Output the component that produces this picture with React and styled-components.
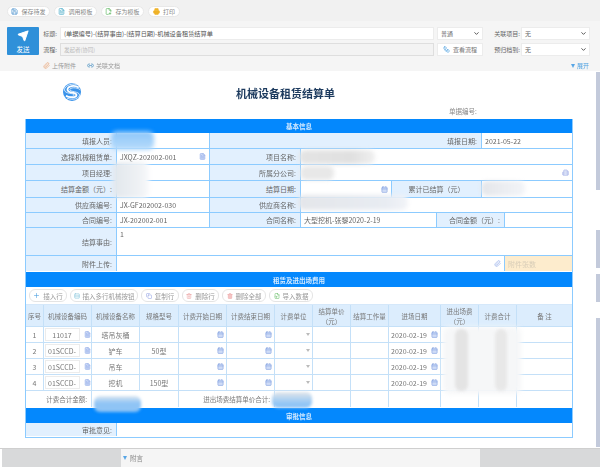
import React from 'react'
import styled, { createGlobalStyle } from 'styled-components'
import {
  Save, FileText, FilePlus2, Printer, Send, Paperclip, Link2, ChevronDown, Plus, Rows3,
  Copy, Trash2, Trash, FileInput, Calendar, Workflow, Building2
} from 'lucide-react'

const GlobalStyle = createGlobalStyle`
  * { box-sizing: border-box; }
  html, body { margin: 0; padding: 0; background: #fff; }
  body {
    width: 600px;
    height: 467px;
    overflow: hidden;
    font-family: "Noto Sans CJK SC", "Liberation Sans", sans-serif;
    font-size: 7px;
    color: #666;
  }
`

const Page = styled.div`
  display: flex;
  flex-direction: column;
  width: 600px;
  height: 467px;
  filter: blur(0.3px);
`

const TopBar = styled.div`
  display: flex;
  flex: none;
  gap: 4px;
  height: 21px;
  padding: 6px 7px 0;
  background: #f1f1f1;
`

const Pill = styled.div`
  display: flex;
  align-items: center;
  justify-content: center;
  gap: 3px;
  width: ${props => props.$w}px;
  height: 11px;
  background: #fff;
  border: 1px solid #e8e8e8;
  border-radius: 6px;
  font-size: 6px;
  color: #888;
  white-space: nowrap;
`

const Header = styled.div`
  flex: none;
  height: 50px;
  padding: 6px 10px 0 7px;
  background: #f5f5f5;
`

const HeaderGrid = styled.div`
  display: grid;
  grid-template-columns: 32px 21px 374px 49px 38px 69px;
  grid-template-rows: 13px 13px;
  row-gap: 3px;
`

const SendButton = styled.div`
  grid-row: 1 / 3;
  display: flex;
  flex-direction: column;
  align-items: center;
  justify-content: center;
  gap: 2px;
  padding-top: 2px;
  height: 28px;
  background: #2f90d9;
  border-radius: 1px;
  color: #fff;
  font-size: 6.5px;
`

const FieldLabel = styled.div`
  display: flex;
  align-items: center;
  justify-content: flex-end;
  padding-right: ${props => props.$pad || 3}px;
  font-size: 6px;
  color: #666;
  white-space: nowrap;
`

const TextInput = styled.div`
  display: flex;
  align-items: center;
  padding-left: 3px;
  background: ${props => props.$muted ? '#f3f3f3' : '#fff'};
  border: 1px solid ${props => props.$muted ? '#dedede' : '#ececec'};
  font-size: ${props => props.$muted ? 5.5 : 6.2}px;
  color: ${props => props.$muted ? '#bbb' : '#555'};
  white-space: nowrap;
`

const SelectBox = styled.div`
  display: flex;
  align-items: center;
  justify-content: space-between;
  margin-left: ${props => props.$gap || 0}px;
  padding: 0 2px 0 3px;
  background: #fff;
  border: 1px solid #ececec;
  font-size: 6px;
  color: #666;
`

const FlowButton = styled(SelectBox)`
  justify-content: center;
  gap: 3px;
  padding: 0;
  color: #777;
`

const LinkRow = styled.div`
  display: flex;
  align-items: center;
  gap: 11px;
  height: 11px;
  margin-top: 4px;
  padding: 0 1px 0 36px;
`

const LinkItem = styled.div`
  display: flex;
  align-items: center;
  gap: 2px;
  font-size: 6px;
  color: #999;
`

const ExpandLink = styled(LinkItem)`
  margin-left: auto;
  color: #4a9fe0;
`

const Middle = styled.div`
  display: flex;
  flex: none;
  height: 377px;
`

const Sheet = styled.div`
  position: relative;
  width: 596px;
  padding-left: 25px;
  background: #fff;
`

const TitleRow = styled.div`
  display: flex;
  height: 48px;
  padding: 12px 0 0 38px;
`

const Logo = styled.svg`
  flex: none;
  width: 18px;
  height: 18px;
`

const FormTitle = styled.div`
  width: 100px;
  margin: 2px 0 0 155px;
  font-size: 11px;
  line-height: 16px;
  font-weight: 700;
  color: #1c3a5e;
  white-space: nowrap;
`

const SerialLabel = styled.div`
  margin: 23px 0 0 113px;
  font-size: 6.5px;
  line-height: 10px;
  color: #888;
`

const FormBox = styled.div`
  width: 548px;
  border: solid #8ccbff;
  border-width: 0 1px 1px;
`

const SectionBar = styled.div`
  display: flex;
  align-items: center;
  justify-content: center;
  height: ${props => props.$h}px;
  background: #0488fd;
  font-size: 6.5px;
  font-weight: 700;
  color: #d8ecff;
`

const Row = styled.div`
  display: grid;
  grid-template-columns: ${props => props.$cols};
  height: ${props => props.$h || 16}px;
  border-bottom: 1px solid ${props => props.$line || '#8ccbff'};
`

const LabelCell = styled.div`
  display: flex;
  align-items: center;
  justify-content: ${props => props.$center ? 'center' : 'flex-end'};
  padding-right: ${props => props.$center ? 0 : 4}px;
  background: #e2f0fe;
  border-right: 1px solid #8ccbff;
  white-space: nowrap;
`

const ValueCell = styled.div`
  display: flex;
  align-items: ${props => props.$top ? 'flex-start' : 'center'};
  justify-content: space-between;
  padding: ${props => props.$top ? '1px 3px 0' : '0 3px'};
  background: ${props => props.$note ? '#fdeccd' : '#fff'};
  border-right: 1px solid #8ccbff;
  color: ${props => props.$note ? '#d8cdb8' : '#666'};
  white-space: nowrap;
  &:last-child { border-right: 0; }
`

const ActionBar = styled.div`
  display: flex;
  align-items: center;
  gap: 3px;
  height: 18px;
  padding-left: 3px;
  background: #fff;
  border-bottom: 1px solid #d5e8fa;
`

const ActionButton = styled(Pill)`
  height: 13px;
  font-size: 6.5px;
  color: #999;
  border-color: #e4e4e4;
`

const HeadCell = styled.div`
  display: flex;
  align-items: center;
  justify-content: center;
  padding: 0 1px;
  background: #dcedfd;
  border-right: 1px solid #c4e0f8;
  font-size: 6.5px;
  line-height: 10px;
  text-align: center;
  color: #777;
  &:last-child { border-right: 0; }
`

const DataCell = styled.div`
  display: flex;
  align-items: center;
  justify-content: ${props => props.$end ? 'flex-end' : 'center'};
  gap: 4px;
  padding: ${props => props.$end ? '0 2px 0 0' : 0};
  border-right: 1px solid #c4e0f8;
  font-size: 7px;
  color: #777;
  white-space: nowrap;
  &:last-child { border-right: 0; }
`

const CodeInput = styled.div`
  display: flex;
  align-items: center;
  justify-content: center;
  width: 35px;
  height: 13px;
  background: #fff;
  border: 1px solid #ececec;
`

const TotalLabel = styled(DataCell)`
  justify-content: flex-end;
  padding-right: 4px;
  font-size: 6.5px;
`

const Arrow = styled.span`
  width: 0;
  height: 0;
  border: 2px solid transparent;
  border-top: 3px solid #bbb;
  border-bottom: 0;
`

const Patch = styled.div`
  position: absolute;
  left: ${props => props.$x}px;
  top: ${props => props.$y}px;
  width: ${props => props.$w}px;
  height: ${props => props.$h}px;
  background: ${props => props.$bg};
  border-radius: 6px;
  filter: blur(${props => props.$blur || 1.5}px);
`

const ScrollTrack = styled.div`
  display: flex;
  flex-direction: column;
  width: 4px;
  padding-top: 1px;
  background: #fff;
`

const Thumb = styled.div`
  flex: none;
  height: ${props => props.$h}px;
  margin-bottom: ${props => props.$gap || 0}px;
  background: #c3cadb;
`

const Footer = styled.div`
  display: flex;
  flex: 1;
  border-top: 1px solid #cfcfcf;
  padding-left: 2px;
  background: #fff;
`

const FooterSide = styled.div`
  flex: ${props => props.$grow ? 1 : 'none'};
  width: 119px;
  background: #d8d9da;
`

const FooterMain = styled.div`
  display: flex;
  align-items: center;
  gap: 3px;
  width: 359px;
  padding: 0 0 0 2px;
  background: #f5f5f5;
  font-size: 6.5px;
  color: #888;
`

const Triangle = styled.span`
  width: 0;
  height: 0;
  border: 2.5px solid transparent;
  border-top: 4px solid ${props => props.$color || '#58a6e6'};
  border-bottom: 0;
`

const BASE_COLS = '91px 93px 91px 91px 90px 90px'
const ROW_COLS = '18px 48px 48px 39px 48px 48px 38px 38px 38px 52px 38px 38px 55px'
const YUAN = '\uFF08元\uFF09'

const tools = [
  { w: 43, text: '保存待发', icon: <Save size={7} color='#2c7fc4' /> },
  { w: 43, text: '调用模板', icon: <FileText size={7} color='#2f9fc0' /> },
  { w: 43, text: '存为模板', icon: <FilePlus2 size={7} color='#4caf50' /> },
  { w: 32, text: '打印', icon: <Printer size={7} color='#f0b429' fill='#f0b429' /> },
]

const actions = [
  { w: 38, text: '插入行', icon: <Plus size={7} color='#4a9fe0' /> },
  { w: 68, text: '插入多行机械按钮', icon: <Rows3 size={6} color='#7fc0d8' /> },
  { w: 38, text: '复制行', icon: <Copy size={6} color='#8c9ce0' /> },
  { w: 37, text: '删除行', icon: <Trash2 size={6} color='#e89a9a' /> },
  { w: 44, text: '删除全部', icon: <Trash size={6} color='#eda4a4' fill='#f4c4c4' /> },
  { w: 44, text: '导入数据', icon: <FileInput size={6} color='#5cb85c' /> },
]

const heads = ['序号', '机械设备编码', '机械设备名称', '规格型号', '计费开始日期', '计费结束日期', '计费单位', `结算单价${YUAN}`, '结算工作量', '进场日期', `进出场费${YUAN}`, '计费合计', '备 注']

const rows = [
  { no: 1, code: '11017', name: '塔吊灰桶', spec: '' },
  { no: 2, code: '01SCCD-', name: '铲车', spec: '50型' },
  { no: 3, code: '01SCCD-', name: '吊车', spec: '' },
  { no: 4, code: '01SCCD-', name: '挖机', spec: '150型' },
]

const patches = [
  { x: 111, y: 60, w: 43, h: 19, bg: 'linear-gradient(#8cc6fa, #b8dcfb)', blur: 2 },
  { x: 113, y: 91, w: 36, h: 36, bg: 'linear-gradient(90deg, #e2e7ec, #eef1f4 70%, #f8f9fb)', blur: 2 },
  { x: 299, y: 79, w: 76, h: 14, bg: 'linear-gradient(90deg, #e4e4e4, #e0e0e0 70%, #f0f0f0)', blur: 2 },
  { x: 300, y: 95, w: 34, h: 14, bg: '#e8e8e8', blur: 2 },
  { x: 298, y: 124, w: 110, h: 15, bg: 'linear-gradient(90deg, #e4e6ea, #e8ecf2 80%, #f2f4f8)', blur: 2 },
  { x: 481, y: 110, w: 44, h: 15, bg: 'linear-gradient(90deg, #e4e6ea, #f2f4f8)', blur: 2 },
  { x: 443, y: 256, w: 78, h: 67, bg: '#f6f7f8', blur: 2.5 },
  { x: 455, y: 258, w: 13, h: 62, bg: '#e4e4e4', blur: 1.5 },
  { x: 495, y: 258, w: 12, h: 62, bg: '#e8e8e8', blur: 1.5 },
  { x: 94, y: 325, w: 47, h: 16, bg: 'linear-gradient(#dbe6f0, #8fc4f5 45%)', blur: 1.5 },
  { x: 272, y: 321, w: 40, h: 16, bg: 'linear-gradient(#e2e6ea, #8fc4f5 75%)', blur: 1.5 },
]

const CalIcon = () => <Calendar size={7} color='#7f9fe0' fill='#cfdcf6' />
const PickIcon = () => <FileText size={7} color='#8fa8e8' fill='#cfdcf6' />

const App = () => (
  <Page>
    <GlobalStyle />
    <TopBar>
      {tools.map(tool => (
        <Pill key={tool.text} $w={tool.w}>{tool.icon}{tool.text}</Pill>
      ))}
    </TopBar>

    <Header>
      <HeaderGrid>
        <SendButton>
          <Send size={12} color='#fff' fill='#fff' />
          发送
        </SendButton>
        <FieldLabel>标题:</FieldLabel>
        <TextInput>(单据编号)-(结算事由)-(结算日期)-机械设备租赁结算单</TextInput>
        <SelectBox $gap={3}>普通<ChevronDown size={7} strokeWidth={3} color='#444' /></SelectBox>
        <FieldLabel $pad={1}>关联项目:</FieldLabel>
        <SelectBox>无<ChevronDown size={7} strokeWidth={3} color='#444' /></SelectBox>
        <FieldLabel>流程:</FieldLabel>
        <TextInput $muted>发起者(协同)</TextInput>
        <FlowButton $gap={3}><Workflow size={7} color='#4a9fe0' />查看流程</FlowButton>
        <FieldLabel $pad={1}>预归档到:</FieldLabel>
        <SelectBox>无<ChevronDown size={7} strokeWidth={3} color='#444' /></SelectBox>
      </HeaderGrid>
      <LinkRow>
        <LinkItem><Paperclip size={7} color='#e8a070' />上传附件</LinkItem>
        <LinkItem><Link2 size={7} color='#2f80b8' />关联文档</LinkItem>
        <ExpandLink><Triangle />展开</ExpandLink>
      </LinkRow>
    </Header>

    <Middle>
      <Sheet>
        <TitleRow>
          <Logo viewBox='0 0 24 24'>
            <circle cx='12' cy='12' r='12' fill='#3a93ea' />
            <path d='M21 6C15 2 6 4 6 9c0 5 12 3 12 7 0 3-7 5-14 1' fill='none' stroke='#fff' strokeWidth='2.4' />
            <path d='M18 2C13 0 2 3 2 9c0 6 13 4 13 7 0 2-6 3-11 2' fill='none' stroke='#fff' strokeWidth='1' />
            <path d='M23 9C18 5 9 6 9 9c0 3 13 2 13 7 0 4-8 8-17 4' fill='none' stroke='#fff' strokeWidth='1' />
          </Logo>
          <FormTitle>机械设备租赁结算单</FormTitle>
          <SerialLabel>单据编号:</SerialLabel>
        </TitleRow>

        <FormBox>
          <SectionBar $h={14}>基本信息</SectionBar>
          <Row $cols='91px 93px 272px 90px'>
            <LabelCell>填报人员:</LabelCell>
            <ValueCell />
            <LabelCell>填报日期:</LabelCell>
            <ValueCell>2021-05-22</ValueCell>
          </Row>
          <Row $cols='91px 93px 91px 271px'>
            <LabelCell>选择机械租赁单:</LabelCell>
            <ValueCell>JXQZ-202002-001<PickIcon /></ValueCell>
            <LabelCell>项目名称:</LabelCell>
            <ValueCell />
          </Row>
          <Row $cols='91px 93px 91px 271px'>
            <LabelCell>项目经理:</LabelCell>
            <ValueCell />
            <LabelCell>所属分公司:</LabelCell>
            <ValueCell><span /><Building2 size={7} color='#a8b4e8' fill='#d8dff6' /></ValueCell>
          </Row>
          <Row $cols={BASE_COLS} $h={17}>
            <LabelCell>{`结算金额${YUAN}:`}</LabelCell>
            <ValueCell />
            <LabelCell>结算日期:</LabelCell>
            <ValueCell><span /><CalIcon /></ValueCell>
            <LabelCell $center>{`累计已结算${YUAN}`}</LabelCell>
            <ValueCell />
          </Row>
          <Row $cols='91px 93px 91px 271px' $h={15}>
            <LabelCell>供应商编号:</LabelCell>
            <ValueCell>JX-GF202002-030</ValueCell>
            <LabelCell>供应商名称:</LabelCell>
            <ValueCell />
          </Row>
          <Row $cols='91px 93px 91px 136px 68px 67px' $h={15}>
            <LabelCell>合同编号:</LabelCell>
            <ValueCell>JX-202002-001</ValueCell>
            <LabelCell>合同名称:</LabelCell>
            <ValueCell>大型挖机-张黎2020-2-19</ValueCell>
            <LabelCell>{`合同金额${YUAN}:`}</LabelCell>
            <ValueCell />
          </Row>
          <Row $cols='91px 455px' $h={28}>
            <LabelCell>结算事由:</LabelCell>
            <ValueCell $top>1</ValueCell>
          </Row>
          <Row $cols='91px 388px 67px' $line='transparent'>
            <LabelCell>附件上传:</LabelCell>
            <ValueCell><span /><Paperclip size={7} color='#8fa8e8' /></ValueCell>
            <ValueCell $note>附件张数</ValueCell>
          </Row>

          <SectionBar $h={15}>租赁及进出场费用</SectionBar>
          <ActionBar>
            {actions.map(action => (
              <ActionButton key={action.text} $w={action.w}>{action.icon}{action.text}</ActionButton>
            ))}
          </ActionBar>
          <Row $cols={ROW_COLS} $h={22} $line='#c4e0f8'>
            {heads.map(head => <HeadCell key={head}>{head}</HeadCell>)}
          </Row>
          {rows.map(row => (
            <Row key={row.no} $cols={ROW_COLS} $line='#c4e0f8'>
              <DataCell>{row.no}</DataCell>
              <DataCell>
                <CodeInput>{row.code}</CodeInput>
                <PickIcon />
              </DataCell>
              <DataCell>{row.name}</DataCell>
              <DataCell>{row.spec}</DataCell>
              <DataCell $end><CalIcon /></DataCell>
              <DataCell $end><CalIcon /></DataCell>
              <DataCell $end><Arrow /></DataCell>
              <DataCell />
              <DataCell />
              <DataCell>2020-02-19<CalIcon /></DataCell>
              <DataCell />
              <DataCell />
              <DataCell />
            </Row>
          ))}
          <Row $cols='66px 87px 96px 76px 38px 52px 38px 38px 55px' $h={17} $line='transparent'>
            <TotalLabel>计费合计金额:</TotalLabel>
            <DataCell />
            <TotalLabel>进出场费结算单价合计:</TotalLabel>
            <DataCell />
            <DataCell />
            <DataCell />
            <DataCell />
            <DataCell />
            <DataCell />
          </Row>

          <SectionBar $h={15}>审批信息</SectionBar>
          <Row $cols='91px 455px' $h={14} $line='transparent'>
            <LabelCell>审批意见:</LabelCell>
            <ValueCell />
          </Row>
        </FormBox>

        {patches.map(patch => (
          <Patch key={`${patch.x}-${patch.y}`} $x={patch.x} $y={patch.y} $w={patch.w} $h={patch.h} $bg={patch.bg} $blur={patch.blur} />
        ))}
      </Sheet>
      <ScrollTrack>
        <Thumb $h={118} $gap={40} />
        <Thumb $h={38} $gap={6} />
        <Thumb $h={28} $gap={16} />
        <Thumb $h={129} />
      </ScrollTrack>
    </Middle>

    <Footer>
      <FooterSide />
      <FooterMain><Triangle />附言</FooterMain>
      <FooterSide $grow />
    </Footer>
  </Page>
)

export default App
